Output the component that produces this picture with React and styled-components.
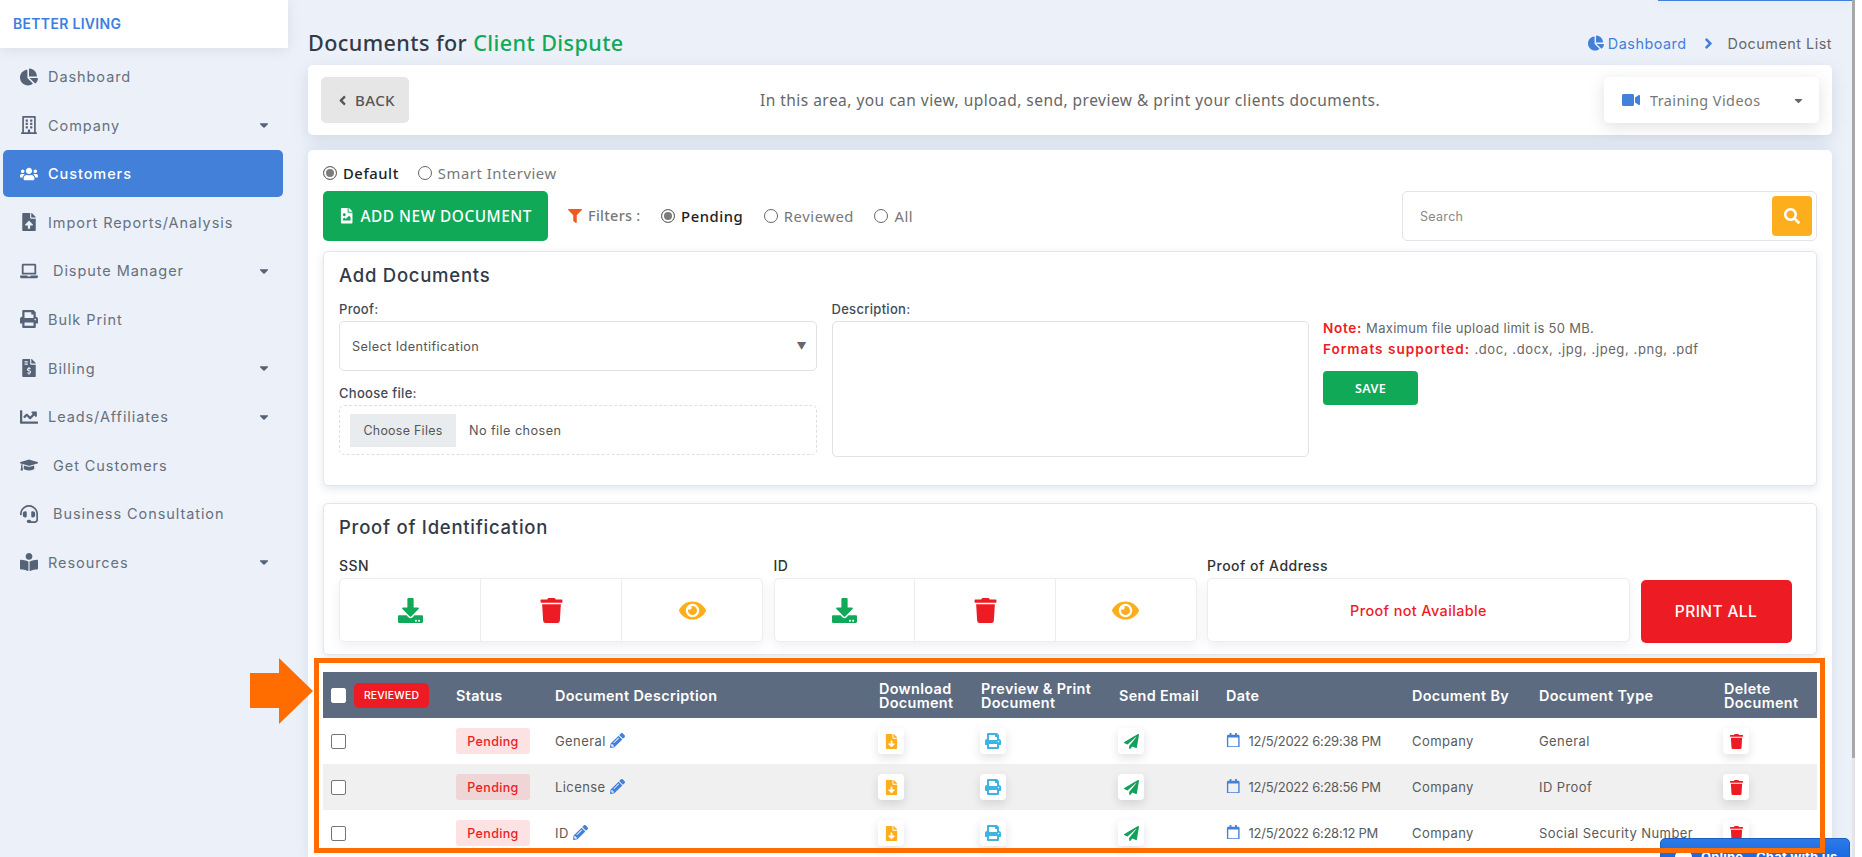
import React from "react";
import styled, { createGlobalStyle } from "styled-components";
import {
  FaChartPie, FaRegBuilding, FaUsers, FaFileUpload, FaLaptop, FaPrint, FaFileInvoiceDollar,
  FaChartLine, FaGraduationCap, FaHeadset, FaBookReader, FaAngleLeft, FaAngleRight, FaVideo,
  FaFileImage, FaFilter, FaSearch, FaDownload, FaTrash, FaEye, FaPencilAlt, FaFileDownload,
  FaPaperPlane, FaRegCalendar, FaComment, FaCaretDown,
} from "react-icons/fa";

const wide = `"Inter", "Liberation Sans", sans-serif`;
const soft = `"Noto Sans", "Open Sans", sans-serif`;

const Global = createGlobalStyle`
  html, body { margin: 0; height: 100%; overflow: hidden; background: #ecf1f9; }
  * { box-sizing: border-box; }
  body { font-family: ${wide}; color: #555; }
`;

const Page = styled.div`
  display: flex; width: 1862px; height: 857px; overflow: hidden; position: relative; background: #ecf1f9;
`;
const Sidebar = styled.aside`
  width: 288px; flex: none; display: flex; flex-direction: column;
`;
const Logo = styled.div`
  height: 48px; background: #fff; display: flex; align-items: center; padding: 0 0 2px 13px;
  color: #3b7fe0; font-size: 14px; font-weight: 600; letter-spacing: .3px;
  box-shadow: 0 2px 12px rgba(90,110,140,.14);
`;
const Nav = styled.nav`
  display: flex; flex-direction: column; padding-top: 5px;
`;
const NavItem = styled.a`
  height: 47px; margin: 0 5px 1.6px 3px; border-radius: 5px; display: flex; align-items: center;
  padding: 0 12px 0 14px; font-size: 14.5px; font-weight: 400; letter-spacing: .93px;
  color: ${p => (p.$active ? "#fff" : "#667080")};
  background: ${p => (p.$active ? "#4280d9" : "transparent")};
  ${p => p.$active && "font-weight: 500;"}
`;
const NavIcon = styled.span`
  width: 23px; margin-right: ${p => (p.$gap ? 13 : 8)}px; flex: none; display: flex; justify-content: center;
  color: ${p => (p.$active ? "#fff" : "#566377")};
  svg { height: 18px; width: auto; }
`;
const NavLabel = styled.span`flex: 1; white-space: nowrap;`;
const Caret = styled(FaCaretDown)`font-size: 14px; color: #566377;`;

const Main = styled.main`
  flex: 1; min-width: 0; padding: 28px 20px 0 20px; display: flex; flex-direction: column;
`;
const TitleRow = styled.div`
  height: 30px; display: flex; align-items: center; justify-content: space-between; margin-bottom: 7px;
`;
const Title = styled.h1`
  margin: 0 0 2px; font: 500 21.6px ${soft}; color: #333a47; letter-spacing: .4px;
  span { color: #10a958; }
`;
const Crumbs = styled.div`
  display: flex; align-items: center; font-size: 14.4px; letter-spacing: .5px; color: #666;
`;
const CrumbLink = styled.span`
  display: flex; align-items: center; gap: 4px; color: #4280d9; font-weight: 400;
  svg { height: 16px; width: auto; }
`;
const CrumbSep = styled(FaAngleRight)`color: #4280d9; margin: 0 11px 0 13px; font-size: 17px;`;

const TopCard = styled.section`
  height: 70px; flex: none; background: #fff; border-radius: 5px; margin-bottom: 15px; padding: 0 13px;
  display: flex; align-items: center; box-shadow: 0 5px 16px rgba(90,110,140,.18);
`;
const BackBtn = styled.button`
  width: 88px; height: 46px; flex: none; border: 0; border-radius: 5px; background: #e6e6e6; color: #555;
  display: flex; align-items: center; justify-content: center; gap: 5px; font: 500 15px ${soft}; letter-spacing: .4px;
`;
const Intro = styled.p`
  flex: 1; margin: 0; padding-left: 127px; text-align: center; font: 400 15.5px ${soft}; color: #666; letter-spacing: .47px;
`;
const Training = styled.div`
  width: 215px; height: 46px; flex: none; border-radius: 5px; background: #fff; box-shadow: 0 4px 16px rgba(60,70,90,.16);
  display: flex; align-items: center; padding: 0 14px 0 18px; font: 400 14.4px ${soft}; color: #777; letter-spacing: .45px;
  svg:first-child { color: #4280d9; height: 18px; width: auto; margin-right: 10px; }
  span { flex: 1; }
  svg:last-child { color: #666; font-size: 13px; }
`;

const MainCard = styled.section`
  flex: 1; background: #fff; border-radius: 5px 5px 0 0; padding: 12px 15px 0;
  box-shadow: 0 0 14px rgba(90,110,140,.14);
`;
const RadioRow = styled.div`
  display: flex; align-items: center; gap: 19px; height: 22px;
`;
const RadioLabel = styled.label`
  display: flex; align-items: center; gap: 6px; font: ${p => (p.$on ? 500 : 400)} 14.8px ${soft};
  color: ${p => (p.$on ? "#222" : "#777")}; letter-spacing: .55px;
`;
const Radio = styled.input.attrs({ type: "radio", readOnly: true })`
  appearance: none; margin: 0; width: 14px; height: 14px; border-radius: 50%; border: 1px solid #666; background: #fff;
  flex: none;
  &:checked { background: #7b7b7b; box-shadow: inset 0 0 0 2px #fff; }
`;
const ToolRow = styled.div`
  display: flex; align-items: center; margin-top: 7px; height: 50px;
`;
const AddBtn = styled.button`
  width: 225px; height: 50px; flex: none; border: 0; border-radius: 5px; background: #10a958; color: #fff;
  display: flex; align-items: center; justify-content: center; gap: 6px; font: 500 15.4px ${soft}; letter-spacing: .5px;
`;
const Filters = styled.div`
  display: flex; align-items: center; margin-left: 20px; gap: 20.5px; flex: 1; padding-bottom: 1px;
`;
const FilterLabel = styled.span`
  display: flex; align-items: center; gap: 6px; font: 500 14.4px ${soft}; color: #777; letter-spacing: .3px;
  svg { color: #f2591d; font-size: 14px; }
`;
const SearchBox = styled.div`
  width: 415px; height: 50px; flex: none; border: 1px solid #e2e4e8; border-radius: 5px; display: flex; align-items: center; padding: 0 4px 0 15px;
`;
const SearchInput = styled.input`
  flex: 1; min-width: 0; border: 0; outline: 0; font: 400 12.5px ${wide}; letter-spacing: .3px;
  &::placeholder { color: #888; }
`;
const SearchBtn = styled.button`
  width: 40px; height: 40px; border: 0; border-radius: 4px; background: #fdae1c; color: #fff; display: flex; align-items: center; justify-content: center; font-size: 16px;
`;

const Panel = styled.section`
  border: 1px solid #e1e6ee; border-radius: 5px; background: #fff; margin-top: ${p => p.$top}px; height: ${p => p.$h}px;
  padding: 8px 15px 0; box-shadow: 0 3px 9px rgba(90,110,140,.17);
`;
const PanelTitle = styled.h2`
  margin: 0 0 ${p => p.$mb}px; height: 30px; font: 500 18.5px/30px ${wide}; color: #333a47; letter-spacing: .75px; white-space: nowrap;
`;
const FormGrid = styled.div`
  display: grid; grid-template-columns: 478px 477px 1fr; column-gap: 14.5px;
`;
const Label = styled.label`
  display: block; height: 16px; line-height: 16px; margin-bottom: 4px; font-size: 13px; font-weight: 500; color: #414a58; letter-spacing: .3px; white-space: nowrap;
`;
const ProofLabel = styled(Label)`font-size: 14px; letter-spacing: .5px; color: #333;`;
const SelectBox = styled.div`
  height: 50px; border: 1px solid #e0e2e6; border-radius: 5px; display: flex; align-items: center; justify-content: space-between;
  padding: 0 9px 0 12px; margin-bottom: 14px; font-size: 12.7px; color: #555; letter-spacing: .4px;
  i { font-style: normal; font-size: 10px; color: #666; }
`;
const FileBox = styled.div`
  height: 50px; border: 1px dashed #dcdfe4; border-radius: 5px; display: flex; align-items: center; padding-left: 10px; font-size: 12.7px; color: #555; letter-spacing: .42px;
`;
const FileBtn = styled.span`
  width: 106px; height: 33px; background: #e9ecef; display: flex; align-items: center; justify-content: center; margin-right: 13px; font-size: 12.4px; letter-spacing: .3px;
`;
const Textarea = styled.textarea`
  display: block; width: 100%; height: 136px; border: 1px solid #e0e2e6; border-radius: 5px; resize: none; outline: 0;
`;
const NoteCol = styled.div`padding-top: 17px; font-size: 13px; color: #666; letter-spacing: .3px;`;
const NoteLine = styled.div`
  height: 21px; line-height: 21px; white-space: nowrap; letter-spacing: ${p => p.$track || ".3px"};
  b { color: #ed1c24; font-weight: 600; font-size: 13.6px; letter-spacing: ${p => p.$boldTrack || ".7px"}; }
`;
const SaveBtn = styled.button`
  display: block; width: 95px; height: 34px; margin-top: 11px; border: 0; border-radius: 4px; background: #10a958; color: #fff; font: 600 12.5px ${soft}; letter-spacing: .3px;
`;
const ProofGrid = styled.div`
  display: grid; grid-template-columns: 424px 423px 423px 151px; column-gap: 10.5px;
`;
const ProofCells = styled.div`
  height: 64px; display: flex; border: 1px solid #ebedf0; border-radius: 5px; background: #fff;
  box-shadow: 0 5px 12px rgba(60,70,90,.08);
`;
const ProofCell = styled.div`
  flex: 1; display: flex; align-items: center; justify-content: center; font-size: ${p => p.$size || 25}px; color: ${p => p.$c};
  & + & { border-left: 1px solid #ebedf0; }
`;
const Missing = styled.div`
  flex: 1; display: flex; align-items: center; justify-content: center; color: #ed1c24; font-size: 14.4px; font-weight: 500; letter-spacing: .4px;
`;
const PrintAll = styled.button`
  height: 63px; align-self: end; margin-bottom: -1px; border: 0; border-radius: 5px; background: #ed1c24; color: #fff; font: 500 15.5px ${wide}; letter-spacing: .4px;
`;

const TableWrap = styled.div`position: relative; margin-top: 17px;`;
const cols = "133px 99px 324px 102px 138px 107px 186px 127px 185px 93px";
const HeadRow = styled.div`
  display: grid; grid-template-columns: ${cols}; height: 46px; align-items: center; background: #5c6b80; color: #fff;
  font-size: 14.4px; font-weight: 600; line-height: 14px; letter-spacing: .34px; padding-top: 1px;
`;
const Row = styled.div`
  display: grid; grid-template-columns: ${cols}; height: 46px; align-items: center; background: ${p => (p.$alt ? "#f0f0f0" : "#fff")};
  font-size: 13px; color: #5a5a5a; letter-spacing: .42px;
`;
const CheckCell = styled.div`display: flex; align-items: center; padding-left: 8px; gap: 8px;`;
const Check = styled.input.attrs({ type: "checkbox", readOnly: true })`
  appearance: none; margin: 0; width: 15px; height: 15px; border-radius: 2px; border: 1px solid ${p => (p.$head ? "#fff" : "#767676")}; background: #fff; flex: none;
`;
const Reviewed = styled.span`
  width: 75px; height: 25px; border-radius: 5px; background: #ed1c24; color: #fff; display: flex; align-items: center; justify-content: center; font-size: 10.4px; font-weight: 500; letter-spacing: .2px;
`;
const Pending = styled.span`
  width: 74px; height: 26px; border-radius: 3px; background: rgba(237,28,36,.13); color: #ed1c24; display: flex; align-items: center; justify-content: center; font-size: 12.5px; font-weight: 500; letter-spacing: .35px;
`;
const Desc = styled.span`
  display: flex; align-items: center; gap: 4px;
  svg { color: #4280d9; font-size: 15px; margin-top: -2px; }
`;
const ActionBtn = styled.span`
  width: 26px; height: 26px; margin-left: -1px; border-radius: 4px; background: #fff; box-shadow: 0 4px 10px rgba(40,50,70,.14);
  display: flex; align-items: center; justify-content: center; color: ${p => p.$c}; font-size: ${p => p.$size || 15}px;
`;
const DateCell = styled.span`
  display: flex; align-items: center; gap: 8px; letter-spacing: -.25px;
  svg { color: #4280d9; font-size: 14.5px; margin-top: -2px; }
`;
const Nowrap = styled.span`white-space: nowrap;`;

const Highlight = styled.div`
  position: absolute; left: -9px; right: -8px; top: -14px; height: 195px; border: 5px solid #ff6d00; z-index: 3; pointer-events: none;
`;
const Arrow = styled.svg`
  position: absolute; left: -74px; top: -15px; z-index: 3;
`;
const ChatTab = styled.div`
  position: absolute; left: 1660px; top: 838px; width: 190px; height: 30px; border-radius: 5px 5px 0 0; z-index: 2;
  background: linear-gradient(#2d7be8, #0f5fdc); border: 1px solid #1b5fc4; color: #fff; font: 700 13px ${wide}; letter-spacing: .2px;
  display: flex; padding: 10px 0 0 14px; gap: 9px; white-space: nowrap;
`;
const ScrollGutter = styled.div`
  width: 10px; flex: none; background: #fff; position: relative; z-index: 4;
`;
const ScrollTrack = styled.div`
  width: 3px; height: 100%; background: #e4e4ea;
`;
const ScrollThumb = styled.div`
  height: 758px; background: #a8a8a8;
`;
const TopEdge = styled.div`
  position: absolute; left: 1658px; top: 0; width: 194px; height: 1px; background: #4280d9; box-shadow: 0 2px 10px rgba(60,70,90,.22);
`;

const nav = [
  ["Dashboard", FaChartPie],
  ["Company", FaRegBuilding, true],
  ["Customers", FaUsers, false, false, true],
  ["Import Reports/Analysis", FaFileUpload],
  ["Dispute Manager", FaLaptop, true, true],
  ["Bulk Print", FaPrint],
  ["Billing", FaFileInvoiceDollar, true],
  ["Leads/Affiliates", FaChartLine, true],
  ["Get Customers", FaGraduationCap, false, true],
  ["Business Consultation", FaHeadset, false, true],
  ["Resources", FaBookReader, true],
];
const rows = [
  ["General", "12/5/2022 6:29:38 PM", "General"],
  ["License", "12/5/2022 6:28:56 PM", "ID Proof"],
  ["ID", "12/5/2022 6:28:12 PM", "Social Security Number"],
];

const ProofSet = () => (
  <ProofCells>
    <ProofCell $c="#10a958"><FaDownload /></ProofCell>
    <ProofCell $c="#ed1c24"><FaTrash /></ProofCell>
    <ProofCell $c="#fdae1c" $size={27}><FaEye /></ProofCell>
  </ProofCells>
);

export default function App() {
  return (
    <Page>
      <Global />
      <Sidebar>
        <Logo>BETTER LIVING</Logo>
        <Nav>
          {nav.map(([label, Icon, caret, gap, active]) => (
            <NavItem key={label} $active={active}>
              <NavIcon $gap={gap} $active={active}><Icon /></NavIcon>
              <NavLabel>{label}</NavLabel>
              {caret && <Caret />}
            </NavItem>
          ))}
        </Nav>
      </Sidebar>
      <Main>
        <TitleRow>
          <Title>Documents for <span>Client Dispute</span></Title>
          <Crumbs>
            <CrumbLink><FaChartPie />Dashboard</CrumbLink>
            <CrumbSep />
            Document List
          </Crumbs>
        </TitleRow>
        <TopCard>
          <BackBtn><FaAngleLeft />BACK</BackBtn>
          <Intro>In this area, you can view, upload, send, preview &amp; print your clients documents.</Intro>
          <Training><FaVideo /><span>Training Videos</span><FaCaretDown /></Training>
        </TopCard>
        <MainCard>
          <RadioRow>
            <RadioLabel $on><Radio name="mode" defaultChecked />Default</RadioLabel>
            <RadioLabel><Radio name="mode" />Smart Interview</RadioLabel>
          </RadioRow>
          <ToolRow>
            <AddBtn><FaFileImage />ADD NEW DOCUMENT</AddBtn>
            <Filters>
              <FilterLabel><FaFilter />Filters :</FilterLabel>
              <RadioLabel $on><Radio name="filter" defaultChecked />Pending</RadioLabel>
              <RadioLabel><Radio name="filter" />Reviewed</RadioLabel>
              <RadioLabel><Radio name="filter" />All</RadioLabel>
            </Filters>
            <SearchBox>
              <SearchInput placeholder="Search" />
              <SearchBtn><FaSearch /></SearchBtn>
            </SearchBox>
          </ToolRow>
          <Panel $top={10} $h={235}>
            <PanelTitle $mb={11}>Add Documents</PanelTitle>
            <FormGrid>
              <div>
                <Label>Proof:</Label>
                <SelectBox>Select Identification<i>▼</i></SelectBox>
                <Label>Choose file:</Label>
                <FileBox><FileBtn>Choose Files</FileBtn>No file chosen</FileBox>
              </div>
              <div>
                <Label>Description:</Label>
                <Textarea />
              </div>
              <NoteCol>
                <NoteLine><b>Note:</b> Maximum file upload limit is 50 MB.</NoteLine>
                <NoteLine $track=".6px" $boldTrack="1px"><b>Formats supported:</b> .doc, .docx, .jpg, .jpeg, .png, .pdf</NoteLine>
                <SaveBtn>SAVE</SaveBtn>
              </NoteCol>
            </FormGrid>
          </Panel>
          <Panel $top={17} $h={152}>
            <PanelTitle $mb={16}>Proof of Identification</PanelTitle>
            <ProofGrid>
              <div><ProofLabel>SSN</ProofLabel><ProofSet /></div>
              <div><ProofLabel>ID</ProofLabel><ProofSet /></div>
              <div>
                <ProofLabel>Proof of Address</ProofLabel>
                <ProofCells><Missing>Proof not Available</Missing></ProofCells>
              </div>
              <PrintAll>PRINT ALL</PrintAll>
            </ProofGrid>
          </Panel>
          <TableWrap>
            <Highlight />
            <Arrow width="65" height="68" viewBox="0 0 65 68">
              <path d="M1 16 H30 V1 L64 34 L30 67 V51 H1 Z" fill="#ff6d00" />
            </Arrow>
            <HeadRow>
              <CheckCell><Check $head /><Reviewed>REVIEWED</Reviewed></CheckCell>
              <span>Status</span>
              <span>Document Description</span>
              <span>Download Document</span>
              <span>Preview &amp; Print<br />Document</span>
              <span>Send Email</span>
              <span>Date</span>
              <span>Document By</span>
              <span>Document Type</span>
              <span>Delete<br />Document</span>
            </HeadRow>
            {rows.map(([d, t, type], i) => (
              <Row key={d} $alt={i === 1}>
                <CheckCell><Check /></CheckCell>
                <Pending>Pending</Pending>
                <Desc>{d} <FaPencilAlt /></Desc>
                <ActionBtn $c="#fdae1c"><FaFileDownload /></ActionBtn>
                <ActionBtn $c="#3eb5e0" $size={16}><FaPrint /></ActionBtn>
                <ActionBtn $c="#13a05c"><FaPaperPlane /></ActionBtn>
                <DateCell><FaRegCalendar /><Nowrap>{t}</Nowrap></DateCell>
                <span>Company</span>
                <Nowrap>{type}</Nowrap>
                <ActionBtn $c="#ed1c24"><FaTrash /></ActionBtn>
              </Row>
            ))}
          </TableWrap>
        </MainCard>
      </Main>
      <ScrollGutter><ScrollTrack><ScrollThumb /></ScrollTrack></ScrollGutter>
      <TopEdge />
      <ChatTab><FaComment size={17} />Online - Chat with us</ChatTab>
    </Page>
  );
}
